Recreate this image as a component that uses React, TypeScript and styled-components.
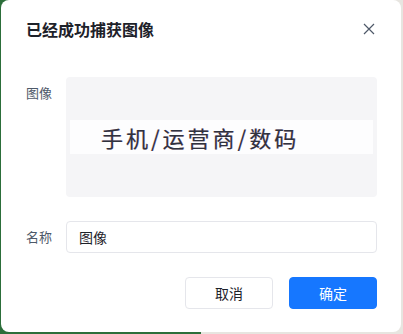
import React from "react";
import styled, { createGlobalStyle } from "styled-components";

const Global = createGlobalStyle`
  html, body { margin: 0; padding: 0; }
  body {
    width: 403px;
    height: 334px;
    overflow: hidden;
    background: linear-gradient(to right, #2c6e3a 0 50%, #e7e5e0 50% 100%);
    font-family: "Noto Sans CJK SC", "Noto Sans", sans-serif;
  }
`;

const Dialog = styled.div`
  box-sizing: border-box;
  margin-left: 1px;
  width: 400px;
  height: 332px;
  background: #fff;
  border-radius: 8px;
  padding: 0 24px 0 25px;
  display: flex;
  flex-direction: column;
`;

const Header = styled.div`
  height: 58px;
  display: flex;
  align-items: center;
  justify-content: space-between;
`;

const Title = styled.div`
  font-size: 16px;
  font-weight: 700;
  color: #1d2129;
  line-height: 24px;
`;

const Close = styled.button`
  width: 16px;
  height: 16px;
  padding: 0;
  border: none;
  background: none;
  display: flex;
  align-items: center;
  justify-content: center;
  color: #4e5969;
`;

const Form = styled.div`
  margin-top: 19px;
  display: flex;
  flex-direction: column;
  gap: 24px;
`;

const Row = styled.div<{ $align?: string }>`
  display: flex;
  align-items: ${(p) => p.$align || "flex-start"};
`;

const Label = styled.div<{ $top?: number }>`
  width: 40px;
  flex: none;
  font-size: 13px;
  line-height: 22px;
  color: #4e5969;
  padding-top: ${(p) => p.$top ?? 0}px;
`;

const Preview = styled.div`
  flex: 1;
  height: 120px;
  background: #f5f5f7;
  border-radius: 4px;
  box-sizing: border-box;
  padding: 0 4px;
  display: flex;
  align-items: center;
`;

const Shot = styled.div`
  flex: 1;
  height: 34px;
  background: #fdfdfe;
  display: flex;
  align-items: center;
  padding-left: 31px;
  font-size: 22px;
  color: #30333e;
  letter-spacing: 3px;
  text-shadow: 0.4px 0 0 rgba(120, 80, 200, 0.45), -0.4px 0 0 rgba(200, 120, 60, 0.35);
`;

const Input = styled.input`
  flex: 1;
  height: 32px;
  box-sizing: border-box;
  border: 1px solid #e5e6eb;
  border-radius: 4px;
  padding: 0 12px;
  font-family: inherit;
  font-size: 14px;
  color: #1d2129;
  outline: none;
`;

const Footer = styled.div`
  margin-top: 24px;
  display: flex;
  justify-content: flex-end;
  gap: 16px;
`;

const Button = styled.button<{ $primary?: boolean }>`
  width: 88px;
  height: 32px;
  box-sizing: border-box;
  border-radius: 4px;
  font-family: inherit;
  font-size: 14px;
  border: 1px solid ${(p) => (p.$primary ? "#1677ff" : "#e5e6eb")};
  background: ${(p) => (p.$primary ? "#1677ff" : "#fff")};
  color: ${(p) => (p.$primary ? "#fff" : "#1d2129")};
`;

export default function App() {
  return (
    <>
      <Global />
      <Dialog>
        <Header>
          <Title>已经成功捕获图像</Title>
          <Close aria-label="close">
            <svg width="12" height="12" viewBox="0 0 12 12">
              <path d="M1 1L11 11M11 1L1 11" stroke="currentColor" strokeWidth="1.2" />
            </svg>
          </Close>
        </Header>
        <Form>
          <Row>
            <Label $top={5}>图像</Label>
            <Preview>
              <Shot>手机/运营商/数码</Shot>
            </Preview>
          </Row>
          <Row $align="center">
            <Label>名称</Label>
            <Input defaultValue="图像" />
          </Row>
        </Form>
        <Footer>
          <Button>取消</Button>
          <Button $primary>确定</Button>
        </Footer>
      </Dialog>
    </>
  );
}
